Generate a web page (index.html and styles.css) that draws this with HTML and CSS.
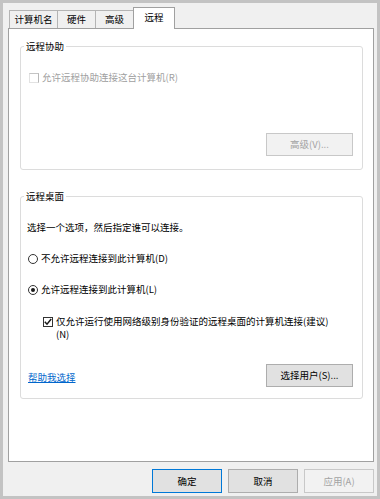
FILE: index.html
```html
<!DOCTYPE html>
<html>
<head>
  <meta charset="UTF-8">
  <meta name="viewport" content="width=device-width, initial-scale=1.0" />
  <title>系统属性 - 远程</title>
  <link rel="stylesheet" href="styles.css">
</head>

<body>
  <div class="dialog">
    <div class="tabs">
      <div class="tab tab-name">计算机名</div>
      <div class="tab tab-hw">硬件</div>
      <div class="tab tab-adv">高级</div>
      <div class="tab tab-remote active">远程</div>
    </div>

    <div class="panel">
      <fieldset class="group group-assist">
        <legend>远程协助</legend>
        <label class="check disabled"><span class="box"></span>允许远程协助连接这台计算机(R)</label>
        <div class="group-actions">
          <button class="btn" disabled>高级(V)...</button>
        </div>
      </fieldset>

      <fieldset class="group group-desktop">
        <legend>远程桌面</legend>
        <p class="hint">选择一个选项，然后指定谁可以连接。</p>
        <label class="radio"><span class="dot"></span>不允许远程连接到此计算机(D)</label>
        <label class="radio checked"><span class="dot"></span>允许远程连接到此计算机(L)</label>
        <label class="check checked nested">
          <span class="box">
            <svg width="8" height="8" viewBox="0 0 8 8"><path d="M0.8 3.8 L3 6.2 L7.2 1" fill="none" stroke="#1a1a1a" stroke-width="1.5"/></svg>
          </span>
          <span>仅允许运行使用网络级别身份验证的远程桌面的计算机连接(建议)<br>(N)</span>
        </label>
        <div class="group-footer">
          <a href="#" class="help">帮助我选择</a>
          <button class="btn">选择用户(S)...</button>
        </div>
      </fieldset>
    </div>

    <div class="buttons">
      <button class="btn btn-sm default">确定</button>
      <button class="btn btn-sm">取消</button>
      <button class="btn btn-sm" disabled>应用(A)</button>
    </div>
  </div>
</body>

</html>
```

FILE: styles.css
```css
* {
  box-sizing: border-box;
  padding: 0;
  margin: 0;
}

html, body {
  width: 380px;
  height: 499px;
}

body {
  border: 3px solid #c3c3c3;
  background: #f0f0f0;
  font-family: "Noto Sans CJK SC", "Noto Sans", sans-serif;
  font-size: 9.5px;
  line-height: 13px;
  color: #000;
}

.dialog {
  display: flex;
  flex-direction: column;
  height: 100%;
  padding: 4px 3px 3px 5px;
}

/* tab strip */
.tabs {
  display: flex;
  align-items: flex-end;
  height: 21px;
  padding-left: 1px;
}

.tab {
  height: 18px;
  margin-right: -1px;
  display: flex;
  align-items: center;
  justify-content: center;
  border: 1px solid #b4b4b4;
  border-bottom: 0;
  background: #f0f0f0;
}

.tab-name { width: 49px; }
.tab-hw { width: 39px; }
.tab-adv { width: 39px; }

.tab.active {
  position: relative;
  z-index: 1;
  width: 42px;
  height: 22px;
  margin-bottom: -1px;
  padding-bottom: 3px;
  background: #fff;
  border-color: #a0a0a0;
}

/* page */
.panel {
  flex: 1;
  display: flex;
  flex-direction: column;
  padding: 0 10px 0 11px;
  background: #fff;
  border: 1px solid #a0a0a0;
}

.group {
  min-width: 0;
  border: 1px solid #dcdcdc;
  border-radius: 3px;
  padding: 18px 9px 13px 7px;
}

.group legend {
  margin-left: -4px;
  padding: 0 2px;
  line-height: 13px;
}

.group-assist {
  margin-top: 11px;
}

.group-desktop {
  margin-top: 20px;
  padding-bottom: 11px;
}

/* check boxes and radios */
.check, .radio {
  display: flex;
  align-items: flex-start;
}

.check .box {
  flex: none;
  width: 10px;
  height: 10px;
  margin: 2px 3px 0 0;
  display: flex;
  align-items: center;
  justify-content: center;
  border: 1px solid #333;
  background: #fff;
}

.check.disabled {
  margin-left: 1px;
  color: #a0a0a0;
}

.check.disabled .box {
  border-color: #c4c4c4 #b8b8b8 #e2e2e2 #e2e2e2;
}

.check.nested {
  margin: 19px 0 0 15px;
}

.radio {
  margin-top: 18px;
}

.radio .dot {
  flex: none;
  width: 10px;
  height: 10px;
  margin: 2px 3px 0 0;
  display: flex;
  align-items: center;
  justify-content: center;
  border: 1px solid #333;
  border-radius: 50%;
  background: #fff;
}

.radio.checked .dot::after {
  content: "";
  width: 4px;
  height: 4px;
  border-radius: 50%;
  background: #1a1a1a;
}

.hint {
  margin-left: -1px;
}

/* buttons */
.btn {
  width: 87px;
  height: 23px;
  font: inherit;
  color: #000;
  background: #e1e1e1;
  border: 1px solid #adadad;
}

.btn:disabled {
  color: #a3a3a3;
  background: #f2f2f2;
  border-color: #c8c8c8;
}

.group-actions {
  display: flex;
  justify-content: flex-end;
  margin-top: 49px;
}

.group-footer {
  display: flex;
  justify-content: space-between;
  align-items: center;
  margin-top: 23px;
}

.help {
  margin-top: 3px;
  color: #0066cc;
  text-decoration: underline;
}

.buttons {
  display: flex;
  justify-content: flex-end;
  gap: 6px;
  margin-top: 7px;
}

.btn-sm {
  width: 70px;
  height: 24px;
}

.btn.default {
  border-color: #0078d7;
}
```
